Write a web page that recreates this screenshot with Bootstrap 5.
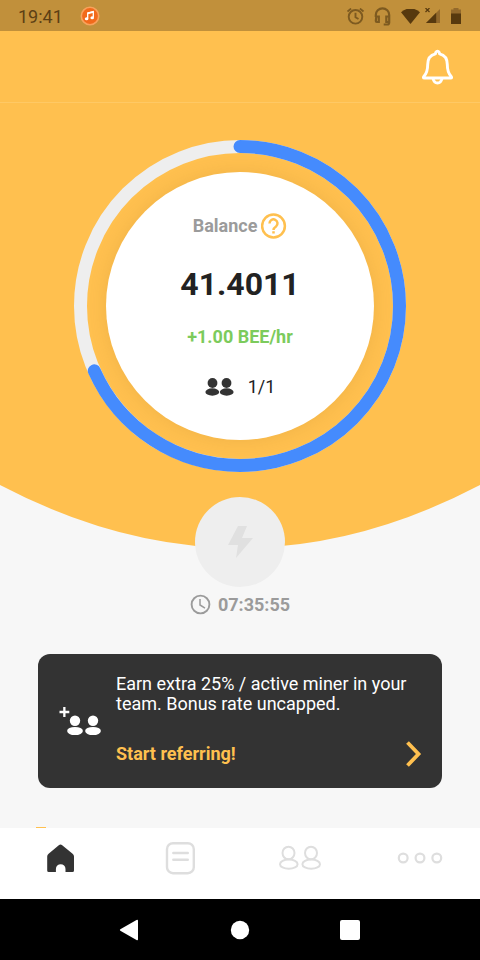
<!DOCTYPE html>
<html lang="en">
<head>
<meta charset="utf-8">
<meta name="viewport" content="width=device-width, initial-scale=1">
<title>Balance</title>
<link href="https://cdn.jsdelivr.net/npm/bootstrap@5.3.0/dist/css/bootstrap.min.css" rel="stylesheet">
<style>
  body { font-family: Roboto, "Liberation Sans", sans-serif; font-size: 18px; line-height: 20px; background: #f7f7f7; color: #222; }
  svg { display: block; flex: none; }
  .honey { background: #ffc04f; }
  .status-bar { background: #c1903b; height: 31px; color: #5c3f14; padding: 2px 18px 0; }
  .top-bar { height: 72px; padding: 0 25px; border-bottom: 1px solid #ffc965; }
  .hero { padding: 37px 0 13px; }
  .ring { display: grid; place-items: center; }
  .ring > * { grid-area: 1 / 1; }
  .dial { width: 268px; height: 268px; padding-top: 41px; box-shadow: 0 0 18px rgba(150, 100, 30, .14); }
  .label-grey { color: #9b9b9b; }
  .amount { font-size: 32px; line-height: 40px; margin-top: 25px; }
  .rate { color: #7ccb5c; margin-top: 23px; }
  .miners { margin-top: 30px; gap: 14px; }
  .boost { width: 90px; height: 90px; margin-top: -51px; background: #eee; border: 0; }
  .timer { margin-top: 7px; gap: 7px; }
  .refer { background: #333; border-radius: 12px; margin: 39px 38px 39px; padding: 20px 20px; color: #fff; }
  .refer:hover { color: #fff; }
  .refer-icon { margin-left: 1px; margin-right: 14px; }
  .refer-cta { color: #ffc04f; margin-top: 26px; }
  .peek { width: 10px; height: 1px; margin-left: 36px; background: #ffc04f; }
  .tab-bar { height: 71px; padding-bottom: 11px; }
  .sys-bar { height: 61px; }
  .sys-bar .btn-row { gap: 70px; }
  .sys-key { width: 40px; height: 40px; background: none; border: 0; padding: 0; }
</style>
</head>
<body class="d-flex flex-column min-vh-100">

<div class="status-bar d-flex align-items-center">
  <span>19:41</span>
  <svg class="ms-3" width="22" height="22" viewBox="0 1 22 22"><circle cx="11" cy="11" r="8.7" fill="#f26a1b" stroke="#f8a25c" stroke-width="1.6"/><path d="M8.700 13.600V8l5.600-1.400v5.800" fill="none" stroke="#fff" stroke-width="1.300"/><path d="M8.700 8.400l5.600-1.400" stroke="#fff" stroke-width="1.800"/><ellipse cx="7.600" cy="13.800" rx="1.800" ry="1.500" fill="#fff"/><ellipse cx="13.200" cy="12.700" rx="1.800" ry="1.500" fill="#fff"/></svg>
  <div class="d-flex align-items-center ms-auto">
    <svg width="18" height="18" viewBox="0 1 18 18" fill="none" stroke="#7d5a20" stroke-width="1.900"><circle cx="8.500" cy="9.800" r="6.800"/><path d="M8.500 5.800v4.400l3 1.800M.5 4.600l3.600-3M16.500 4.600l-3.600-3"/></svg>
    <svg class="ms-2" width="20" height="20" viewBox="0 1 20 20" fill="none" stroke="#7d5a20" stroke-width="2.200"><path d="M2.800 11V9a6.700 6.700 0 0 1 13.400 0v7.500q0 2-2 2h-3.500M3.300 10.500h2.500v5.500h-2q-1 0-1-1zM15.800 10.500h-2.500v5.500h2.500"/></svg>
    <svg class="ms-2" width="20" height="16" viewBox="0 1 20 16"><path d="M0 4.300Q9.500-3.600 19 4.300L9.500 16z" fill="#57390e"/></svg>
    <svg class="ms-1" width="17" height="18" viewBox="1 1 17 18"><path d="M16 2v14H2z" fill="#93692b"/><path d="M12.200 5.800V16H2z" fill="#57390e"/><path d="M1.500 1l4 4M5.500 1l-4 4" stroke="#57390e" stroke-width="1.200"/></svg>
    <svg class="ms-2" width="12" height="18" viewBox="0 1 12 18"><path d="M3.500 1h5v1.500h2.500V7H1V2.500h2.500z" fill="#93692b"/><path d="M1 6.500h10V17H1z" fill="#57390e"/></svg>
  </div>
</div>

<header class="top-bar honey d-flex align-items-center justify-content-end">
  <button type="button" class="btn p-0 border-0" aria-label="Notifications">
    <svg width="36" height="36" viewBox="0 0 36 36" fill="none" stroke="#fff" stroke-width="2.900" stroke-linejoin="round" stroke-linecap="round"><path d="M16.700 3.600Q18.500.6 20.300 3.600L20.600 4.800C26 6 28.300 10 28.300 15.500C28.300 22 29.400 24.500 32 27.200Q33.500 29 31.500 29H5.500Q3.500 29 5 27.200C7.600 24.500 8.700 22 8.700 15.500C8.700 10 11 6 16.400 4.800z"/><path d="M14 29.500q1 4.500 4.500 4.500t4.500-4.500"/></svg>
  </button>
</header>

<main class="flex-grow-1">
  <section class="hero honey">
    <div class="ring">
      <svg width="332" height="332" viewBox="0 0 332 332" fill="none" stroke-width="13"><circle cx="166" cy="166" r="159.500" stroke="#eee"/><circle cx="166" cy="166" r="159.500" stroke="#458bfd" stroke-linecap="round" pathLength="360" stroke-dasharray="246 360" transform="rotate(-90 166 166)"/></svg>
      <div class="dial rounded-circle bg-white d-flex flex-column align-items-center">
        <div class="d-flex align-items-center label-grey fw-bold">
          <span>Balance</span>
          <button type="button" class="btn p-0 border-0 ms-1" aria-label="About balance">
            <svg width="26" height="26" viewBox="0 0 26 26" fill="none" stroke="#ffc04f" stroke-width="2.500"><circle cx="12.500" cy="13" r="11.400"/><path d="M8.500 10.400a4 4 0 1 1 6.500 3.100q-2.500 1.700-2.500 3.500M12.500 18.200v2.400"/></svg>
          </button>
        </div>
        <div class="amount fw-bold">41.4011</div>
        <div class="rate fw-bold">+1.00 BEE/hr</div>
        <div class="miners d-flex align-items-center">
          <svg width="29" height="18" viewBox="0 0 29 18" fill="#333"><circle cx="7.500" cy="5" r="4.900"/><circle cx="21.500" cy="5" r="4.900"/><ellipse cx="7.300" cy="14" rx="6.900" ry="3.700"/><ellipse cx="21.700" cy="14" rx="6.900" ry="3.700"/></svg>
          <span>1/1</span>
        </div>
      </div>
    </div>
  </section>
  <svg class="w-100" height="63" viewBox="0 0 480 63" preserveAspectRatio="none"><path d="M0 0H480Q240 126 0 0z" fill="#ffc04f"/></svg>

  <div class="d-flex flex-column align-items-center label-grey fw-bold">
    <button type="button" class="boost rounded-circle d-flex align-items-center justify-content-center position-relative" aria-label="Boost">
      <svg width="28" height="34" viewBox="0 0 28 34" fill="#e0e0e0"><path d="M12 1h9l-5 12h11L10 33l2-13H2z"/></svg>
    </button>
    <div class="timer d-flex align-items-center">
      <svg width="21" height="21" viewBox="0 0 21 21" fill="none" stroke="#9b9b9b" stroke-width="1.900"><circle cx="10.500" cy="10.500" r="8.900"/><path d="M10 5v6l5 3.200" stroke-width="1.500"/></svg>
      <span>07:35:55</span>
    </div>
  </div>

  <a href="#refer" class="refer d-flex align-items-center text-decoration-none">
    <svg class="refer-icon" width="43" height="32" viewBox="0 0 43 32" fill="#fff"><path d="M4.200 2h2.300v3.800h3.800v2.400H6.500V12H4.200V8.200H.5V5.800h3.700z"/><circle cx="16" cy="15.700" r="5.200"/><circle cx="34" cy="15.700" r="5.200"/><ellipse cx="16" cy="26" rx="7.900" ry="4.100"/><ellipse cx="34" cy="26" rx="7.900" ry="4.100"/></svg>
    <div class="flex-grow-1">
      <div>Earn extra 25% / active miner in your team. Bonus rate uncapped.</div>
      <div class="refer-cta fw-bold d-flex align-items-center justify-content-between">
        <span>Start referring!</span>
        <svg width="16" height="28" viewBox="0 0 16 28" fill="none" stroke="#ffc04f" stroke-width="3.800"><path d="M1.500 2.500L12.500 14L1.500 25.500"/></svg>
      </div>
    </div>
  </a>
  <div class="peek"></div>
</main>

<nav class="tab-bar bg-white d-flex align-items-center" aria-label="Main">
  <a class="col d-flex justify-content-center" href="#home" aria-label="Home">
    <svg width="30" height="32" viewBox="0 0 30 32" fill="#333"><path d="M13.800 3.200Q15.500 1.600 17.200 3.200L27.600 11.800Q29 13 29 14.500V28.500Q29 30 27.500 30H20.500V27a4.800 4.800 0 0 0-9.600 0v3H3.700Q2.200 30 2.200 28.500V14.500Q2.200 13 3.600 11.800z"/></svg>
  </a>
  <a class="col d-flex justify-content-center" href="#news" aria-label="News">
    <svg width="30" height="34" viewBox="0 0 30 34" fill="none" stroke="#dedede" stroke-width="2.400"><rect x="2" y="2.200" width="26.800" height="30" rx="6"/><path d="M8.300 12h14.500M8.300 18.800h14.500" stroke-linecap="round"/></svg>
  </a>
  <a class="col d-flex justify-content-center" href="#team" aria-label="Team">
    <svg width="44" height="26" viewBox="0 0 44 26" fill="none" stroke="#dedede" stroke-width="2"><ellipse cx="10.500" cy="8" rx="6" ry="6.300"/><ellipse cx="33" cy="8" rx="6" ry="6.300"/><ellipse cx="10.800" cy="19.200" rx="8.800" ry="4.600"/><ellipse cx="33.200" cy="19.200" rx="8.800" ry="4.600"/></svg>
  </a>
  <a class="col d-flex justify-content-center" href="#more" aria-label="More">
    <svg width="46" height="14" viewBox="0 0 46 14" fill="none" stroke="#dedede" stroke-width="2.200"><circle cx="6.200" cy="7" r="4.400"/><circle cx="23" cy="7" r="4.400"/><circle cx="39.800" cy="7" r="4.400"/></svg>
  </a>
</nav>

<div class="sys-bar bg-black d-flex align-items-center justify-content-center">
  <div class="btn-row d-flex">
    <button type="button" class="sys-key d-flex align-items-center justify-content-center" aria-label="Back"><svg width="22" height="22" viewBox="0 0 22 22" fill="#fff"><path d="M1.300 10.200L17.500 1Q19 .3 19 1.800V20.200Q19 21.700 17.500 21L1.300 11.800Q.4 11 1.300 10.200z"/></svg></button>
    <button type="button" class="sys-key d-flex align-items-center justify-content-center" aria-label="Home screen"><svg width="20" height="20" viewBox="0 0 20 20" fill="#fff"><circle cx="10" cy="10" r="9.200"/></svg></button>
    <button type="button" class="sys-key d-flex align-items-center justify-content-center" aria-label="Recent apps"><svg width="20" height="20" viewBox="0 0 20 20" fill="#fff"><rect width="20" height="20" rx="2"/></svg></button>
  </div>
</div>

<script src="https://cdn.jsdelivr.net/npm/bootstrap@5.3.0/dist/js/bootstrap.bundle.min.js"></script>
</body>
</html>
